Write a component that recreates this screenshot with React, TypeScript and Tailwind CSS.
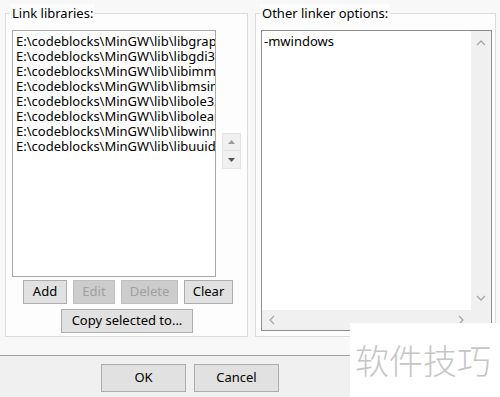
import React from 'react';

const libs = [
  'E:\\codeblocks\\MinGW\\lib\\libgraph.a',
  'E:\\codeblocks\\MinGW\\lib\\libgdi32.a',
  'E:\\codeblocks\\MinGW\\lib\\libimm32.a',
  'E:\\codeblocks\\MinGW\\lib\\libmsimg32.a',
  'E:\\codeblocks\\MinGW\\lib\\libole32.a',
  'E:\\codeblocks\\MinGW\\lib\\liboleaut32.a',
  'E:\\codeblocks\\MinGW\\lib\\libwinmm.a',
  'E:\\codeblocks\\MinGW\\lib\\libuuid.a',
];

const Btn: React.FC<{ label: string; w: string; disabled?: boolean }> = ({ label, w, disabled }) => (
  <button
    className={`${w} h-[24px] border flex items-center justify-center ${
      disabled ? 'bg-[#cccccc] border-[#bfbfbf] text-[#a0a0a0]' : 'bg-[#e1e1e1] border-[#adadad] text-black'
    }`}
  >
    {label}
  </button>
);

const Chevron: React.FC<{ d: string }> = ({ d }) => (
  <svg width="10" height="6" viewBox="0 0 10 6" fill="none" stroke="#a6a6a6" strokeWidth="1.3">
    <path d={d} />
  </svg>
);

export default function App() {
  return (
    <div
      className="w-[500px] h-[397px] bg-[#f0f0f0] relative overflow-hidden text-[13px] text-black"
      style={{ fontFamily: '"Noto Sans", "Open Sans", sans-serif' }}
    >
      {/* main panel */}
      <div className="h-[356px] bg-[#f8f8f8] border-b border-[#a0a0a0] flex gap-[7px] pl-[5px] pt-[13px]">
        {/* Link libraries */}
        <div className="relative w-[243px] h-[324px] border border-[#dcdcdc] bg-[#fdfdfd] pl-[6px] pt-[16px]">
          <span className="absolute left-[4px] top-[-10px] px-[2px] bg-[#fdfdfd] leading-[18px]">Link libraries:</span>
          <div className="flex items-start gap-[6px]">
            <div className="w-[204px] h-[247px] bg-white border border-[#a8a8a8] pt-[3px] pl-[3px] overflow-hidden">
              {libs.map((l) => (
                <div key={l} className="h-[15px] leading-[15px] whitespace-nowrap">{l}</div>
              ))}
            </div>
            <div className="mt-[103px] w-[19px] flex flex-col">
              <div className="h-[18px] bg-[#f0f0f0] border border-[#e4e4e4] flex items-center justify-center">
                <svg width="7" height="4" viewBox="0 0 7 4"><path d="M0 4 L3.5 0 L7 4 Z" fill="#9a9a9a" /></svg>
              </div>
              <div className="h-[18px] bg-[#f0f0f0] border border-[#e4e4e4] border-t-0 flex items-center justify-center">
                <svg width="7" height="4" viewBox="0 0 7 4"><path d="M0 0 L3.5 4 L7 0 Z" fill="#555" /></svg>
              </div>
            </div>
          </div>
          <div className="flex gap-[6px] mt-[3px] ml-[11px]">
            <Btn label="Add" w="w-[44px]" />
            <Btn label="Edit" w="w-[42px]" disabled />
            <Btn label="Delete" w="w-[57px]" disabled />
            <Btn label="Clear" w="w-[49px]" />
          </div>
          <div className="mt-[5px] ml-[49px]">
            <Btn label="Copy selected to..." w="w-[132px]" />
          </div>
        </div>

        {/* Other linker options */}
        <div className="relative w-[241px] h-[324px] border border-[#dcdcdc] bg-[#fdfdfd] pl-[5px] pt-[16px]">
          <span className="absolute left-[4px] top-[-10px] px-[2px] bg-[#fdfdfd] leading-[18px]">Other linker options:</span>
          <div className="w-[231px] h-[301px] bg-white border border-[#8c8c8c] grid grid-cols-[1fr_20px] grid-rows-[1fr_20px]">
            <div className="pl-[2px] pt-[3px] leading-[15px]">-mwindows</div>
            <div className="bg-[#f0f0f0] flex flex-col items-center justify-between py-[9px]">
              <Chevron d="M1 5 L5 1 L9 5" />
              <Chevron d="M1 1 L5 5 L9 1" />
            </div>
            <div className="bg-[#f0f0f0] flex items-center justify-between px-[7px]">
              <svg width="6" height="10" viewBox="0 0 6 10" fill="none" stroke="#a6a6a6" strokeWidth="1.3"><path d="M5 1 L1 5 L5 9" /></svg>
              <svg width="6" height="10" viewBox="0 0 6 10" fill="none" stroke="#a6a6a6" strokeWidth="1.3"><path d="M1 1 L5 5 L1 9" /></svg>
            </div>
            <div className="bg-[#f0f0f0]" />
          </div>
        </div>
      </div>

      {/* dialog buttons */}
      <div className="flex gap-[8px] pl-[101px] pt-[8px]">
        <button className="w-[85px] h-[28px] bg-[#e1e1e1] border border-[#adadad]">OK</button>
        <button className="w-[85px] h-[28px] bg-[#e1e1e1] border border-[#adadad]">Cancel</button>
      </div>

      {/* watermark */}
      <div
        className="absolute left-[350px] top-[323px] w-[150px] h-[74px] bg-white flex items-center pl-[5px] text-[34px] text-[#c6c6c6] leading-none"
        style={{ fontFamily: '"Noto Sans CJK SC", sans-serif', fontWeight: 300 }}
      >
        软件技巧
      </div>
    </div>
  );
}
